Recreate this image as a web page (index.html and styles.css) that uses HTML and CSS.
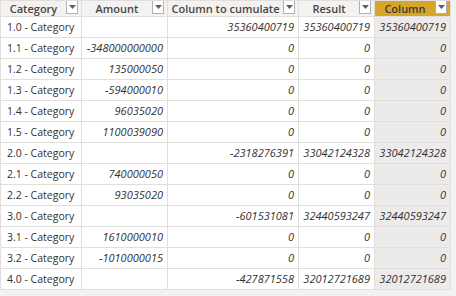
FILE: index.html
```html
<!DOCTYPE html>
<html>
<head>
<meta charset="utf-8">
<link rel="stylesheet" href="styles.css">
</head>
<body>
<table class="grid">
  <colgroup>
    <col class="c1"><col class="c2"><col class="c3"><col class="c4"><col class="c5">
  </colgroup>
  <thead>
    <tr>
      <th><div class="hd"><span class="ht">Category</span><span class="dd"><svg width="7" height="4" viewBox="0 0 7 4"><path d="M0 0h7L3.5 4z" fill="#605e5c"/></svg></span></div></th>
      <th><div class="hd"><span class="ht">Amount</span><span class="dd"><svg width="7" height="4" viewBox="0 0 7 4"><path d="M0 0h7L3.5 4z" fill="#605e5c"/></svg></span></div></th>
      <th><div class="hd"><span class="ht">Column to cumulate</span><span class="dd"><svg width="7" height="4" viewBox="0 0 7 4"><path d="M0 0h7L3.5 4z" fill="#605e5c"/></svg></span></div></th>
      <th><div class="hd"><span class="ht">Result</span><span class="dd"><svg width="7" height="4" viewBox="0 0 7 4"><path d="M0 0h7L3.5 4z" fill="#605e5c"/></svg></span></div></th>
      <th class="sel"><div class="hd"><span class="ht">Column</span><span class="dd"><svg width="7" height="4" viewBox="0 0 7 4"><path d="M0 0h7L3.5 4z" fill="#605e5c"/></svg></span></div></th>
    </tr>
  </thead>
  <tbody>
    <tr><td class="cat">1.0 - Category</td><td class="num"></td><td class="num">35360400719</td><td class="num">35360400719</td><td class="num hl">35360400719</td></tr>
    <tr><td class="cat">1.1 - Category</td><td class="num">-348000000000</td><td class="num">0</td><td class="num">0</td><td class="num hl">0</td></tr>
    <tr><td class="cat">1.2 - Category</td><td class="num">135000050</td><td class="num">0</td><td class="num">0</td><td class="num hl">0</td></tr>
    <tr><td class="cat">1.3 - Category</td><td class="num">-594000010</td><td class="num">0</td><td class="num">0</td><td class="num hl">0</td></tr>
    <tr><td class="cat">1.4 - Category</td><td class="num">96035020</td><td class="num">0</td><td class="num">0</td><td class="num hl">0</td></tr>
    <tr><td class="cat">1.5 - Category</td><td class="num">1100039090</td><td class="num">0</td><td class="num">0</td><td class="num hl">0</td></tr>
    <tr><td class="cat">2.0 - Category</td><td class="num"></td><td class="num">-2318276391</td><td class="num">33042124328</td><td class="num hl">33042124328</td></tr>
    <tr><td class="cat">2.1 - Category</td><td class="num">740000050</td><td class="num">0</td><td class="num">0</td><td class="num hl">0</td></tr>
    <tr><td class="cat">2.2 - Category</td><td class="num">93035020</td><td class="num">0</td><td class="num">0</td><td class="num hl">0</td></tr>
    <tr><td class="cat">3.0 - Category</td><td class="num"></td><td class="num">-601531081</td><td class="num">32440593247</td><td class="num hl">32440593247</td></tr>
    <tr><td class="cat">3.1 - Category</td><td class="num">1610000010</td><td class="num">0</td><td class="num">0</td><td class="num hl">0</td></tr>
    <tr><td class="cat">3.2 - Category</td><td class="num">-1010000015</td><td class="num">0</td><td class="num">0</td><td class="num hl">0</td></tr>
    <tr><td class="cat">4.0 - Category</td><td class="num"></td><td class="num">-427871558</td><td class="num">32012721689</td><td class="num hl">32012721689</td></tr>
  </tbody>
</table>
</body>
</html>
```
FILE: styles.css
```css
html, body {
  margin: 0;
  padding: 0;
  background: #f3f2f1;
  width: 456px;
  height: 296px;
  overflow: hidden;
}
.grid {
  border-collapse: collapse;
  table-layout: fixed;
  width: 450px;
  font-family: "Open Sans", "Noto Sans", sans-serif;
  font-size: 11px;
  color: #323130;
  background: #fff;
}
.c1 { width: 81px; }
.c2 { width: 86px; }
.c3 { width: 131px; }
.c4 { width: 76px; }
.c5 { width: 76px; }
th, td {
  border: 1px solid #e1dfdd;
  padding: 0;
  white-space: nowrap;
  overflow: hidden;
}
th {
  height: 15px;
  background: #f3f2f1;
  font-weight: 600;
  color: #484644;
  font-size: 11px;
}
th.sel {
  background: #d7a527;
  color: #3b3a39;
}
.hd {
  display: flex;
  align-items: flex-start;
  height: 15px;
}
.ht {
  flex: 1;
  text-align: center;
  line-height: 15px;
}
.dd {
  flex: none;
  width: 10px;
  height: 12px;
  margin: 0 3px 0 0;
  background: #fff;
  border: 1px solid #b3b0ad;
  border-top: 0;
  display: flex;
  align-items: center;
  justify-content: center;
}
td {
  height: 20px;
  line-height: 20px;
}
td.cat {
  padding-left: 6px;
  font-size: 10.5px;
}
td.num {
  text-align: right;
  font-style: italic;
  padding-right: 4px;
}
td.hl {
  background: #edebe9;
}
```
